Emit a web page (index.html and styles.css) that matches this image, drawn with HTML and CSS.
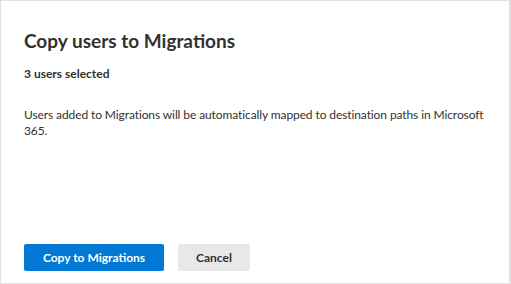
FILE: index.html
```html
<!doctype html>
<html lang="en">
  <head>
    <meta charset="UTF-8" />
    <meta name="viewport" content="width=device-width, initial-scale=1.0" />
    <title>Copy users to Migrations</title>
    <link rel="stylesheet" href="styles.css">
  </head>
  <body>
    <div class="dialog">
      <header>
        <h1>Copy users to Migrations</h1>
        <p class="count">3 users selected</p>
      </header>
      <main>
        <p class="description">
          Users added to Migrations will be automatically mapped to destination
          paths in Microsoft 365.
        </p>
      </main>
      <footer class="actions">
        <button class="primary">Copy to Migrations</button>
        <button class="secondary">Cancel</button>
      </footer>
    </div>
  </body>
</html>
```

FILE: styles.css
```css
html,
body {
  margin: 0;
  height: 100%;
}
body {
  font-family: Lato, "Open Sans", sans-serif;
  color: #323130;
  background: #fff;
}
.dialog {
  box-sizing: border-box;
  height: 284px;
  width: 511px;
  border: 1px solid #e1e1e1;
  border-right-width: 2px;
  padding: 0 16px 12px 23px;
  display: flex;
  flex-direction: column;
}
h1 {
  font-size: 19px;
  font-weight: 700;
  margin: 27px 0 0;
  line-height: 26px;
}
.count {
  font-size: 12px;
  font-weight: 700;
  margin: 12px 0 0;
  line-height: 16px;
}
main {
  flex: 1;
}
.description {
  font-size: 12px;
  letter-spacing: -0.1px;
  line-height: 16px;
  margin: 25px 0 0;
}
.actions {
  display: flex;
  gap: 14px;
}
button {
  font-family: inherit;
  font-size: 12px;
  font-weight: 700;
  height: 27px;
  border: none;
  border-radius: 2px;
  padding: 0 16px;
  cursor: pointer;
}
.primary {
  background: #0078d4;
  color: #fff;
  width: 140px;
}
.secondary {
  background: #e8e8e8;
  color: #323130;
  width: 72px;
}
```
